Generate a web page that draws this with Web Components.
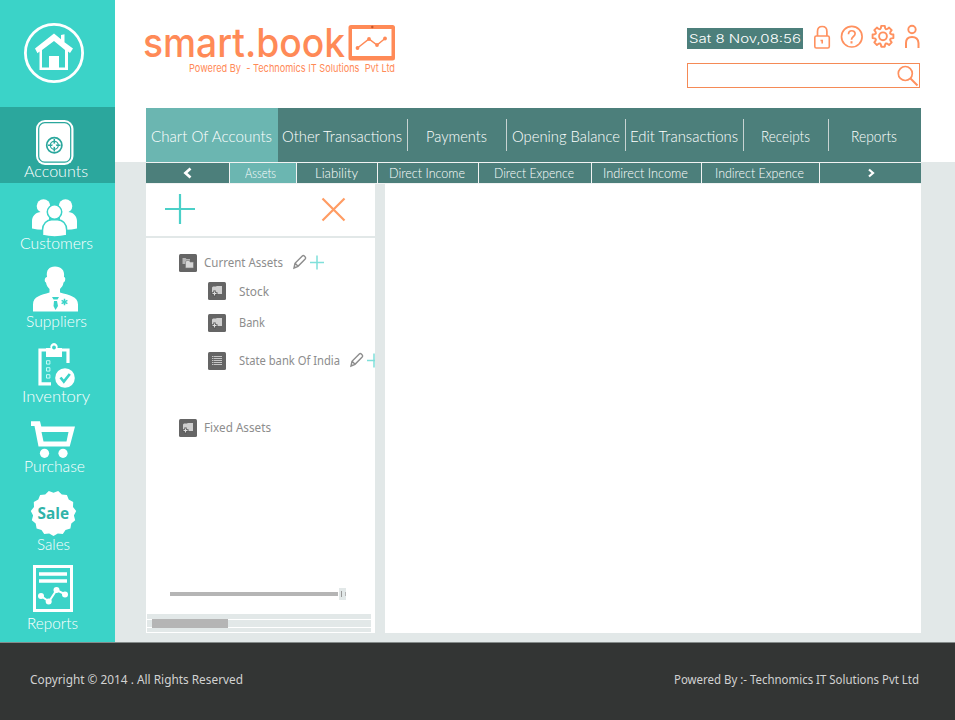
<!DOCTYPE html>
<html lang="en">
<head>
<meta charset="utf-8">
<title>smart.book</title>
<style>
body{margin:0;background:#fff;font-family:Lato,"Liberation Sans",sans-serif}
</style>
</head>
<body>
<book-app></book-app>
<script>
const define=(name,html,after)=>{
  const t=document.createElement('template');t.innerHTML=html;
  customElements.define(name,class extends HTMLElement{
    constructor(){super();this.attachShadow({mode:'open'}).append(t.content.cloneNode(true));}
    connectedCallback(){if(after)after(this,this.shadowRoot);}
  });
};

/* One line of text, stretched or condensed to the width given in "w" */
customElements.define('fit-text',class extends HTMLElement{
  constructor(){
    super();
    this.attachShadow({mode:'open'}).innerHTML=`<style>
      :host{display:block;white-space:nowrap;flex:none}
      span{display:inline-block;transform-origin:0 50%}
    </style><span><slot></slot></span>`;
  }
  connectedCallback(){
    const w=+this.getAttribute('w'),s=this.shadowRoot.querySelector('span');
    this.style.width=w+'px';
    const n=s.getBoundingClientRect().width;
    if(n)s.style.transform=`scaleX(${w/n})`;
  }
});

/* Sidebar entry: icon slot above, label below */
define('side-item',`<style>
  :host{display:block;color:#fff;font:300 16px/20px Lato,"Liberation Sans",sans-serif}
  :host([active]){background:#2ba79d;padding-bottom:2px}
  .label{display:flex;height:20px}
  ::slotted(svg){display:block;overflow:visible}
</style><slot name="icon"></slot><div class="label"><slot></slot></div>`,
(el,r)=>{r.querySelector('.label').style.paddingLeft=el.getAttribute('indent')+'px';});

define('side-bar',`<style>
  :host{display:block;width:115px;height:642px;background:#3bd3c8;box-sizing:border-box}
  svg{display:block;fill:#fff}
</style>
<svg width="115" height="107" viewBox="0 0 115 107">
  <circle cx="54" cy="53" r="28.6" fill="none" stroke="#fff" stroke-width="2.8"/>
  <path d="M35 48.5 54 33.5l7 5.7V35l3.500-.7v8l8.500 6.300-3 4.500-2-1.600V70H39.500V51.500l-2 1.700zM42 50v17.500h7V56h10v11.500h6V50L54 41z" fill-rule="evenodd"/>
</svg>
<side-item active indent="24">
  <svg slot="icon" width="115" height="54" viewBox="0 107 115 54" fill="#fff">
    <rect x="36" y="120" width="37.500" height="45" rx="9"/>
    <rect x="38.700" y="122.700" width="32" height="39.500" rx="6" fill="none" stroke="#2ba79d" stroke-width="1.200"/>
    <circle cx="54.300" cy="145.300" r="7.600" fill="none" stroke="#2ba79d" stroke-width="1.700"/>
    <circle cx="54.300" cy="145.300" r="4" fill="none" stroke="#2ba79d" stroke-width="1.200"/>
    <path d="M54.300 139v12.500M48 145.300h12.500" stroke="#2ba79d" stroke-width="1.500"/>
    <circle cx="54.300" cy="145.300" r="1.800"/>
  </svg><fit-text w="64">Accounts</fit-text>
</side-item>
<side-item indent="19.5">
  <svg slot="icon" width="115" height="50" viewBox="0 183 115 50" fill="#fff">
    <circle cx="43.500" cy="206" r="6.800"/><circle cx="65.500" cy="206" r="6.800"/>
    <path d="M32 228.500V221c0-5 4-9 9-9h8v17.500q-9 1-17-1zM77 228.500V221c0-5-4-9-9-9h-8v17.500q9 1 17-1z"/>
    <g stroke="#3bd3c8" stroke-width="1.500"><circle cx="54.500" cy="212" r="7.200"/>
    <path d="M42.500 235.500V230c0-6 4.500-10.300 9-10.300h6c5 0 9.200 4.300 9.200 10.300v5.500q-12 3-24.200 0z"/></g>
  </svg><fit-text w="73">Customers</fit-text>
</side-item>
<side-item indent="25.5">
  <svg slot="icon" width="115" height="58" viewBox="0 253 115 58" fill="#fff">
    <path d="M47 277c-1-7 2-10.500 8-10.500s10 3.500 9 10.500c2 0 1.500 5-.5 5.500-.5 4-2.500 5-3.500 6.500v3.500c9 2.500 18 4 18 12V311.500H33v-7c0-8 8-9.500 16.500-12V289c-1.500-1.500-3-3-3.500-6.500-2-.5-1.500-5.500 1-5.500z"/>
    <path d="M52 297h7l-1.500 2.500h-4zM54 301h3l1 5-2.500 4-2-4z" fill="#3bd3c8"/>
    <path d="M64.500 298.700v6.600M61.600 300.300l5.800 3.400M67.400 300.300l-5.800 3.400" stroke="#3bd3c8" stroke-width="1.500"/>
  </svg><fit-text w="61">Suppliers</fit-text>
</side-item>
<side-item indent="21.5">
  <svg slot="icon" width="115" height="55" viewBox="0 331 115 55" fill="#fff">
    <path d="M51 383.800H40V350h28v13" fill="none" stroke="#fff" stroke-width="3.200"/>
    <path d="M46 348h4.500a3.700 3.700 0 1 1 7 0H62v9H46z"/><circle cx="54" cy="347.500" r="1.900" fill="#3bd3c8"/>
    <path d="M46.500 360.700h3.400v3.400h-3.400zM46.500 367.700h3.400v3.400h-3.400zM46.500 374.700h3.400v3.400h-3.400z" fill="none" stroke="#d6fffb" stroke-width=".9"/>
    <circle cx="65" cy="378" r="9.800"/><path d="M60.500 377.500l3.300 4 6-7.500" fill="none" stroke="#3bd3c8" stroke-width="2.700"/>
  </svg><fit-text w="68">Inventory</fit-text>
</side-item>
<side-item indent="24">
  <svg slot="icon" width="115" height="50" viewBox="0 406 115 50" fill="#fff">
    <path d="M31 421.300h9l1.300 5.200H75l-5.300 20H38.500L34.500 426H31zM41.500 432l2 9.500h23l2-9.500z" fill-rule="evenodd"/>
    <circle cx="44.500" cy="453.300" r="4.600"/><circle cx="63" cy="453.300" r="4.600"/>
  </svg><fit-text w="61">Purchase</fit-text>
</side-item>
<side-item indent="36.5">
  <svg slot="icon" id="seal" width="115" height="58" viewBox="0 476 115 58" fill="#fff">
    <polygon/><text x="37.500" y="518.500" textLength="31.500" lengthAdjust="spacingAndGlyphs" style="font:700 15.500px 'Open Sans','Noto Sans',sans-serif" fill="#2fb3a9">Sale</text>
  </svg><fit-text w="33">Sales</fit-text>
</side-item>
<side-item indent="27">
  <svg slot="icon" width="115" height="59" viewBox="0 554 115 59" fill="#fff">
    <rect x="34.500" y="566.500" width="37" height="44" fill="none" stroke="#fff" stroke-width="3"/>
    <path d="M39 574h28M39 581h28" stroke="#fff" stroke-width="3.300"/>
    <path d="M41 596l8 5.500 7.500-11.500 9 4.500" fill="none" stroke="#fff" stroke-width="2"/>
    <circle cx="41" cy="596" r="3"/><circle cx="48.700" cy="601.500" r="3"/><circle cx="56.500" cy="590" r="3"/><circle cx="65" cy="594.500" r="3"/>
  </svg><fit-text w="51">Reports</fit-text>
</side-item>`,(el,r)=>{
  const p=[],n=15;
  for(let i=0;i<n*2;i++){const a=Math.PI*i/n+Math.PI/2,q=i%2?20.500:22.800;p.push((53.500+q*Math.cos(a)).toFixed(1)+','+(513.300+q*Math.sin(a)).toFixed(1));}
  r.querySelector('#seal polygon').setAttribute('points',p.join(' '));
});

define('book-logo',`<style>
  :host{display:grid;grid-template-columns:204px 48px;grid-template-rows:37px 16px;color:#ff8a57;width:252px}
  .name{font:500 40px/37px Inter,"DejaVu Sans",sans-serif;height:37px;margin-left:-1px}
  .tag{grid-column:1/3;padding-left:45px;font:400 11px/14px Inter,sans-serif}
  svg{display:block;overflow:visible}
</style>
<fit-text class="name" w="202">smart.book</fit-text>
<svg width="48" height="37" viewBox="348 24 48 37" fill="#ff8a57">
  <path d="M351 25h41.500q2.500 0 2.500 2.500V58q0 2.500-2.500 2.500H351q-2.500 0-2.500-2.500V27.500q0-2.500 2.500-2.500zM352 29v27h39.500V29z" fill-rule="evenodd"/>
  <circle cx="372.300" cy="27" r="1.200" fill="#c4552a"/>
  <path d="M357.500 48l11.500-9 8 6 8-6.500" fill="none" stroke="#ff8a57" stroke-width="1.500"/>
  <circle cx="357.500" cy="48" r="1.900"/><circle cx="369" cy="39" r="1.900"/><circle cx="377" cy="45" r="1.900"/><circle cx="385" cy="38.500" r="1.900"/>
</svg>
<div class="tag"><fit-text w="206">Powered By &nbsp;- Technomics IT Solutions &nbsp;Pvt Ltd</fit-text></div>`);

define('top-tools',`<style>
  :host{display:block;width:234px}
  .row{display:flex;height:39px}
  .date{margin-top:4px;width:116px;height:21px;box-sizing:border-box;padding-left:2px;background:#4c7f7b;color:#fff;font:300 11.500px/22px Inter,"DejaVu Sans",sans-serif}
  .search{display:flex;justify-content:flex-end;width:233px;height:25px;box-sizing:border-box;border:1px solid #f58a56}
  svg{display:block;fill:none;stroke:#ff915f;stroke-width:2;overflow:visible}
</style>
<div class="row">
  <div class="date"><fit-text w="112">Sat 8 Nov,08:56</fit-text></div>
  <svg width="118" height="39" viewBox="803 24 118 39">
    <rect x="814.800" y="36" width="14.500" height="12" rx="1.500" stroke-width="1.600"/>
    <path d="M817.500 36v-4.500q0-5 4.700-5t4.700 5V36" stroke-width="1.700"/><path d="M820.500 40.500h1.700v3" stroke-width="1.600"/>
    <circle cx="851.800" cy="36.700" r="10.300" stroke-width="1.700"/>
    <path d="M848.500 34.200c0-4.800 6.700-4.300 6.600-.5 0 2.800-3.600 2.800-3.600 6" stroke-width="1.700"/><path d="M851.500 41.200v2.300" stroke-width="2"/>
    <path id="gear" stroke-width="1.900" stroke-linejoin="round"/><circle cx="883" cy="36.300" r="3.900" stroke-width="1.900"/>
    <circle cx="912" cy="29.500" r="3.700" stroke-width="1.900"/><path d="M906 48v-5q0-6 6-6t6.500 6v5" stroke-width="2"/>
  </svg>
</div>
<div class="search"><svg width="23" height="23" viewBox="896 64 23 23"><circle cx="905.300" cy="73.500" r="7" stroke-width="1.700"/><path d="M910.500 78.500l7 7" stroke-width="2"/></svg></div>`,
(el,r)=>{
  const pts=[];
  for(let i=0;i<8;i++)for(const [o,q] of [[-.5,7.700],[-.32,8.600],[-.22,10.600],[.22,10.600],[.32,8.600]]){
    const a=(i+o)*Math.PI/4;pts.push((883+q*Math.cos(a)).toFixed(1)+' '+(36.300+q*Math.sin(a)).toFixed(1));}
  r.querySelector('#gear').setAttribute('d','M'+pts.join('L')+'Z');
});

define('nav-tabs',`<style>
  :host{display:block;width:775px;color:#fff}
  .main{display:grid;grid-template-columns:132px 130px 99px 119px 118px 85px 92px;height:54px;background:#4c7f7b;font:300 15.500px/20px Lato,sans-serif}
  .main>div{display:flex;align-items:center;justify-content:center;background:linear-gradient(#c7d3d2,#c7d3d2) 100% 11px/1px 32px no-repeat;padding:2px 1.500px 0 0}
  .main>div:first-child{background:#6bb6b1}
  .main>div:last-child{background:none;padding-right:3px}
  .main>.rc{padding-right:3px}
  .sub{display:grid;grid-template-columns:83px 66px 80px 100px 112px 109px 117px 101px;gap:1px;height:20px;background:#f1f3f3;border:solid #f1f3f3;border-width:1px 0;font:300 13px/20px Lato,sans-serif}
  .sub>div{display:flex;align-items:center;justify-content:center;background:#4c7f7b;padding-right:1.500px}
  .sub>.on{background:#6bb6b1;padding-right:5px}
  svg{fill:none;stroke:#fff;display:block}
</style>
<div class="main">
  <div><fit-text w="121">Chart Of Accounts</fit-text></div><div><fit-text w="120">Other Transactions</fit-text></div>
  <div><fit-text w="61">Payments</fit-text></div><div><fit-text w="108">Opening Balance</fit-text></div>
  <div><fit-text w="108">Edit Transactions</fit-text></div><div class="rc"><fit-text w="49">Receipts</fit-text></div><div><fit-text w="46">Reports</fit-text></div>
</div>
<div class="sub">
  <div><svg width="10" height="12"><path d="M8.500 1.500 3.500 6l5 4.500" stroke-width="2.800"/></svg></div>
  <div class="on"><fit-text w="31">Assets</fit-text></div><div><fit-text w="43">Liability</fit-text></div>
  <div><fit-text w="76">Direct Income</fit-text></div><div><fit-text w="80">Direct Expence</fit-text></div>
  <div><fit-text w="85">Indirect Income</fit-text></div><div><fit-text w="89">Indirect Expence</fit-text></div>
  <div style="padding:0"><svg width="8" height="10"><path d="M2 1.500 6 5 2 8.500" stroke-width="2.200"/></svg></div>
</div>`);

/* Account tree row; kind = stack | folder | list */
define('tree-row',`<style>
  :host{display:flex;align-items:center;color:#8d8d8d;font:400 12px/20px "Noto Sans","Open Sans",sans-serif}
  svg{display:block;flex:none}
  .text{flex:none}
  .tools{margin-left:10px;margin-top:-3px}
  :host(:not([tools])) .tools{display:none}
</style>
<svg width="18" height="18"><rect width="18" height="18" rx="1.500" fill="#656565"/><g id="g"></g></svg>
<div class="text"><slot></slot></div>
<svg class="tools" width="33" height="16" fill="none">
  <path d="M1 14l1-4.700 7.300-7.300q1-.9 2 .1l.9.900q1 1 0 2L5 12.300zM2.300 9.500l2.500 2.600" stroke="#8d8d8d" stroke-width="1.400"/>
  <path d="M17 8.500h14M24 1.500v14" stroke="#7fe0da" stroke-width="1.500"/>
</svg>`,(el,r)=>{
  const k=el.getAttribute('kind');
  r.querySelector('#g').innerHTML=k==='list'
    ?'<path d="M4 4.500h1.500M4 6.500h1.500M4 8.500h1.500M4 10.500h1.500M4 12.500h1.500M6 4.500h8M6 6.500h8M6 8.500h8M6 10.500h8M6 12.500h8" stroke="#c6c6c6"/>'
    :k==='stack'
    ?'<path d="M3.500 4h3l1 1H11v5H3.500z" fill="#b4b4b4"/><path d="M6.500 8 7.500 6.500h3l.5 1.500h3.500V14h-8z" fill="#d6d6d6" stroke="#777" stroke-width=".6"/>'
    :'<path d="M4 5.500 5 4.500h3l.8-.5H14v8H4z" fill="#cfcfcf"/><path d="M6.500 8.500v6M3.500 11.500h6" stroke="#555" stroke-width="2.400"/><path d="M6.500 9.500v4M4.500 11.500h4" stroke="#ddd" stroke-width="1.200"/>';
  r.querySelector('.text').style.marginLeft=el.getAttribute('gap')+'px';
});

define('tree-panel',`<style>
  :host{display:flex;flex-direction:column;width:229px;height:449px;background:#fff;overflow:hidden}
  .bar{height:52px;flex:none;border-bottom:2px solid #e2e8e8}
  .bar svg{display:block;fill:none}
  .tree{display:grid;flex:none;grid-template-rows:28px 28px 36px 40px 27px 40px;padding:11px 0 0 33px;height:338px;box-sizing:border-box}
  .in{margin-left:29px}
  .stock fit-text{padding-top:2px}
  .gap{grid-row:6}
  .slider{display:flex;flex:none;align-items:center;height:12px;padding-left:24px;margin-top:12px}
  .line{width:168px;height:4px;background:#b5b5b5}
  .knob{margin-left:1px;width:7px;height:12px;background:#e2e8e8}
  .knob svg{display:block}
  .scroll{flex:none;margin:14px 4px 0 1px;height:18px;background:linear-gradient(#e2e8e8 5px,#fff 5px 6px,#e2e8e8 6px 13px,#fff 13px 14px,#e2e8e8 14px);display:flex}
  .thumb{margin:5px 0 0 5px;width:76px;height:9px;background:#b5b5b5}
</style>
<div class="bar"><svg width="229" height="52" viewBox="146 184 229 52">
  <path d="M165 209h30M180 194v30" stroke="#4bd0c8" stroke-width="2.200"/>
  <path d="M322.500 198.500l22 22M344.500 198.500l-22 22" stroke="#ff9c63" stroke-width="2.200"/></svg></div>
<div class="tree">
  <tree-row kind="stack" gap="7" tools><fit-text w="79">Current Assets</fit-text></tree-row>
  <tree-row class="in stock" kind="folder" gap="13"><fit-text w="30">Stock</fit-text></tree-row>
  <tree-row class="in" kind="folder" gap="13"><fit-text w="26">Bank</fit-text></tree-row>
  <tree-row class="in" kind="list" gap="13" tools><fit-text w="101">State bank Of India</fit-text></tree-row>
  <tree-row class="gap" kind="folder" gap="7"><fit-text w="67">Fixed Assets</fit-text></tree-row>
</div>
<div class="slider"><div class="line"></div><div class="knob"><svg width="7" height="12"><path d="M2.500 3v6" stroke="#999"/><path d="M6.500 4v4" stroke="#b5b5b5"/></svg></div></div>
<div class="scroll"><div class="thumb"></div></div>`);

define('book-footer',`<style>
  :host{display:flex;justify-content:space-between;box-sizing:border-box;height:78px;border-top:1px solid #858b8a;padding:26px 36px 0 30px;background:#333534;color:#d2d2d2;font:400 12px/20px "Noto Sans",sans-serif}
  .l{padding-top:1px}
  .r{font-size:13px}
</style><fit-text class="l" w="213">Copyright © 2014 . All Rights Reserved</fit-text><fit-text class="r" w="245">Powered By :- Technomics IT Solutions Pvt Ltd</fit-text>`);

define('book-app',`<style>
  :host{display:block;width:955px;height:720px;overflow:hidden}
  .top{display:flex;height:642px}
  main{flex:1;box-sizing:border-box;padding-left:31px;background:linear-gradient(#fff 162px,#e2e8e8 162px)}
  header{display:flex;justify-content:space-between;height:108px;box-sizing:border-box;padding:24px 34px 0 0}
  book-logo{margin-left:-2px}
  .panels{display:flex;gap:10px}
  .content{width:536px;height:449px;background:#fff}
</style>
<div class="top"><side-bar></side-bar>
<main><header><book-logo></book-logo><top-tools></top-tools></header>
<nav-tabs></nav-tabs>
<div class="panels"><tree-panel></tree-panel><div class="content"></div></div></main></div>
<book-footer></book-footer>`);
</script>
</body>
</html>
